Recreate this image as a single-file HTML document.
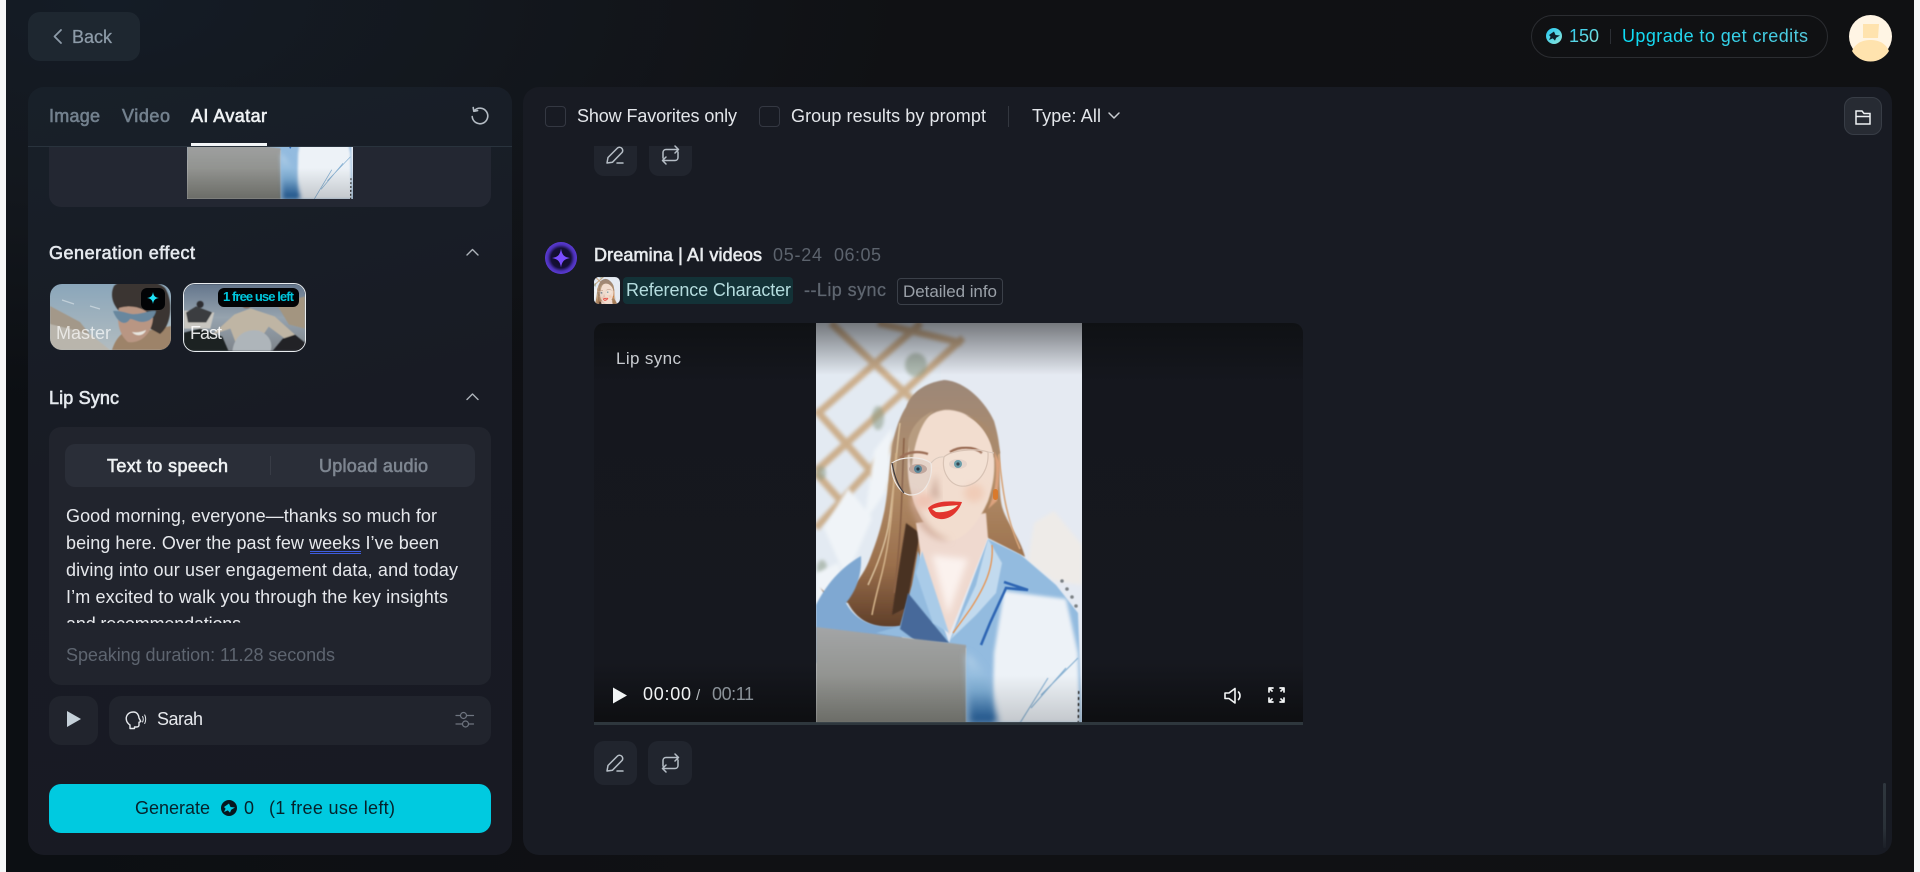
<!DOCTYPE html>
<html lang="en"><head><meta charset="utf-8"><title>Dreamina AI Avatar</title>
<style>
html,body{margin:0;padding:0;width:1920px;height:872px;overflow:hidden;background:#f6f7f8;font-family:"Liberation Sans",sans-serif}
.a{position:absolute;box-sizing:border-box}
#main{left:6px;top:0;width:1908px;height:872px;background:radial-gradient(800px 400px at 100px 0,#141c26 0%,#13171d 50%,rgba(16,17,20,0) 100%),linear-gradient(90deg,#0c0f13 0,#101114 40%,#101113 100%)}
svg{position:absolute;overflow:hidden}
text{font-family:"Liberation Sans",sans-serif;font-size:18px}
.m{stroke-width:.25px}
.b{stroke-width:.6px}
</style></head><body>
<svg width="0" height="0" style="position:absolute"><defs>
<filter id="b1" x="-10%" y="-10%" width="120%" height="120%"><feGaussianBlur stdDeviation="1.800"/></filter>
<filter id="b2" x="-10%" y="-10%" width="120%" height="120%"><feGaussianBlur stdDeviation=".9"/></filter>
<filter id="b3" x="-30%" y="-30%" width="160%" height="160%"><feGaussianBlur stdDeviation="3.500"/></filter>
<filter id="b4" x="-10%" y="-10%" width="120%" height="120%"><feGaussianBlur stdDeviation=".45"/></filter>
<linearGradient id="hair" x1="0" y1="0" x2="0" y2="1"><stop offset="0" stop-color="#9c8778"/><stop offset=".4" stop-color="#b28d68"/><stop offset=".75" stop-color="#9a6f4c"/><stop offset="1" stop-color="#5f3e28"/></linearGradient>
<linearGradient id="lap" x1="0" y1="0" x2="0" y2="1"><stop offset="0" stop-color="#a3a5a6"/><stop offset="1" stop-color="#82837c"/></linearGradient>
<linearGradient id="blu" x1="0" y1="0" x2="0" y2="1"><stop offset="0" stop-color="#b4d0e8"/><stop offset=".55" stop-color="#7fb0d8"/><stop offset="1" stop-color="#1c5c9e"/></linearGradient>
<linearGradient id="topf" x1="0" y1="0" x2="0" y2="1"><stop offset="0" stop-color="#050608" stop-opacity=".5"/><stop offset=".13" stop-color="#050608" stop-opacity="0"/><stop offset=".88" stop-color="#050608" stop-opacity="0"/><stop offset="1" stop-color="#050608" stop-opacity=".18"/></linearGradient>
<symbol id="photo" viewBox="0 0 266 400" preserveAspectRatio="none">
<rect width="266" height="400" fill="#e5eaf2"/>
<rect x="0" width="125" height="320" fill="#e3eaf2"/>
<g filter="url(#b1)" fill="none" stroke="#c9a882" stroke-width="7" opacity=".9">
<path d="M105 0L0 92M147 15L0 148M125 70L0 205"/><path d="M15 0L100 80M0 87L70 165M0 150L40 195M62 0L146 20"/>
</g>
<g filter="url(#b1)" fill="#8a9a84" opacity=".55"><ellipse cx="100" cy="42" rx="11" ry="12"/><ellipse cx="62" cy="95" rx="6" ry="12"/><ellipse cx="5" cy="150" rx="5" ry="7"/><ellipse cx="6" cy="245" rx="5" ry="8"/></g>
<g filter="url(#b1)" fill="#f0f4f8"><path d="M58 128L76 105 72 165 48 200Z"/><path d="M8 205L32 165 56 195 30 255Z"/><path d="M0 250L22 240 30 262 0 280Z"/></g>
<path filter="url(#b1)" d="M218 200L238 188 266 222 266 262 238 258 212 238Z" fill="#eeebe8"/>
<g filter="url(#b4)" fill="#7b8185"><circle cx="246" cy="258" r="1.800"/><circle cx="251" cy="266" r="1.800"/><circle cx="256" cy="274" r="1.800"/><circle cx="260" cy="283" r="1.800"/></g>
<!-- hair -->
<path filter="url(#b2)" d="M128 57C108 60 95 70 90 84 80 100 76 120 74 140 72 160 71 178 67 194 63 212 58 225 53 238 48 250 40 262 29 270 15 274 8 270 4 264 10 276 22 276 32 280 38 292 50 303 67 304L86 304C92 290 95 280 96 267L105 228 170 214 209 234C205 218 195 205 190 194 184 182 183 170 184 137 184 118 180 105 178 98 170 80 150 58 128 57Z" fill="url(#hair)"/>
<path filter="url(#b2)" d="M90 200C86 225 80 262 76 292L90 285 100 232 104 210Z" fill="#4a3024"/>
<g filter="url(#b4)" fill="none" stroke-width="1.600"><path d="M84 100C80 130 78 170 72 205 68 225 60 245 52 262" stroke="#d6bc98"/><path d="M80 130C77 170 76 210 66 250 62 265 58 280 56 292" stroke="#cfae86"/><path d="M88 115C86 160 86 210 78 270" stroke="#8a6246"/><path d="M182 125C186 160 188 190 204 226" stroke="#d7a67c"/></g>
<!-- shirt -->
<path filter="url(#b2)" d="M0 282C10 262 24 245 45 233 46 252 40 268 30 280 40 298 58 306 84 303L90 340 0 340Z" fill="#7fa8d2"/>
<path filter="url(#b2)" d="M102 228L133 320 172 216 205 232 240 262 262 290 266 400 150 400 150 325 60 310 84 303 96 262Z" fill="#93bbdf"/>
<path filter="url(#b2)" d="M92 270L133 320 100 318 84 306Z" fill="#46699a"/>
<!-- neck -->
<path filter="url(#b2)" d="M100 200L106 240 133 312 172 215 170 190Z" fill="#efd9cf"/>
<path filter="url(#b3)" d="M116 232L132 292 152 236Z" fill="#fbf2ee"/>
<path filter="url(#b2)" d="M106 228L133 310 117 300 100 250Z" fill="#a9cbe8"/>
<path filter="url(#b2)" d="M172 216L186 240 180 270 160 292 135 316 160 262Z" fill="#c2daee"/>
<!-- white shirt right -->
<path filter="url(#b1)" d="M188 268L250 276 262 330 264 400 176 400 178 330Z" fill="#edf2f7"/>
<path d="M188 259L212 267 190 265 174 300 165 322" stroke="#2f66b4" stroke-width="2.600" fill="none" filter="url(#b4)"/>
<path d="M176 222C178 245 168 265 155 285 148 295 142 303 137 310" stroke="#e8914c" stroke-width="1.300" fill="none" filter="url(#b4)"/>
<!-- face -->
<path filter="url(#b2)" d="M128 87C108 90 94 108 92 132 90 160 97 182 106 197 114 210 125 217 133 218 150 217 165 195 172 178 178 160 179 148 178 132 174 104 150 85 128 87Z" fill="#f2ddcf"/>
<path filter="url(#b3)" d="M95 165C100 195 118 214 135 217 114 220 92 195 95 165Z" fill="#cca491"/>
<ellipse cx="108" cy="178" rx="10" ry="8" fill="#eec5b4" filter="url(#b3)"/><ellipse cx="158" cy="170" rx="10" ry="9" fill="#f0ccb8" filter="url(#b3)"/>
<path filter="url(#b2)" d="M92 120C94 104 106 92 118 88 104 100 98 120 95 150Z" fill="#b79c80"/>
<path filter="url(#b2)" d="M150 92C166 100 176 116 178 135L184 130C180 110 168 96 150 92Z" fill="#a98a6d"/>
<path filter="url(#b2)" d="M178 128C182 148 180 170 172 186L181 178 184 140Z" fill="#dca27d"/>
<path d="M84 135C92 128 103 128 112 131M134 129C144 123 157 123 166 130" stroke="#9d7058" stroke-width="2.400" fill="none" filter="url(#b4)"/>
<ellipse cx="102" cy="146" rx="9" ry="5" fill="#c9ab9e"/><ellipse cx="142" cy="141" rx="9" ry="5" fill="#e3cfc3"/>
<circle cx="102" cy="146" r="4" fill="#57889a"/><circle cx="142" cy="141" r="4" fill="#57919f"/>
<circle cx="102" cy="146" r="1.600" fill="#1d2d38"/><circle cx="142" cy="141" r="1.600" fill="#1d2d38"/>
<path d="M76 140C86 133 105 133 115 140 117 155 110 172 95 172 84 172 74 155 76 140Z" fill="#8f8f9b" fill-opacity=".12" stroke="#efe9e5" stroke-width="1.200"/>
<path d="M76 140C78 150 80 160 88 170" stroke="#3f3b3f" stroke-width="1.200" fill="none"/>
<path d="M128 134C135 127 160 125 172 129 173 145 165 160 150 163 135 165 125 150 128 134Z" fill="#fff" fill-opacity=".12" stroke="#d8c3b5" stroke-width="1.200"/>
<path d="M115 140Q121 133 128 134M172 129L178 130" stroke="#d9c9bd" stroke-width="1.100" fill="none"/>
<path filter="url(#b3)" d="M120 150L114 172 124 178Z" fill="#cfae9f"/>
<path d="M112 185C120 177 135 178 146 179 141 193 130 197 124 196 117 195 114 191 112 185Z" fill="#e2352e"/>
<path d="M116 186C124 183 134 183 142 182 137 188 126 190 120 189Z" fill="#f4efd9"/>
<rect x="177" y="166" width="5" height="11" rx="2.500" fill="#d97a2c"/>
<!-- laptop -->
<path filter="url(#b2)" d="M0 304L150 322 150 400 0 400Z" fill="url(#lap)"/>
<path filter="url(#b3)" d="M150 330C160 336 172 350 176 372L182 400 154 400Z" fill="url(#blu)"/>
<path filter="url(#b4)" d="M204 400L232 355M215 385L250 345M225 372L262 335" stroke="#86b0d2" stroke-width="1.100" fill="none"/>
<path d="M263 368L262 400" stroke="#3a3a3a" stroke-width="2.200" stroke-dasharray="3 3" fill="none" filter="url(#b4)"/>
<rect width="266" height="400" fill="url(#topf)"/>
</symbol>
<linearGradient id="crd" x1="0" y1="0" x2="1" y2="1"><stop offset="0" stop-color="#22c7f2"/><stop offset="1" stop-color="#8fe6d8"/></linearGradient>
<linearGradient id="upg" x1="0" y1="0" x2="1" y2="0"><stop offset="0" stop-color="#0bdcf5"/><stop offset="1" stop-color="#53c9de"/></linearGradient>
<radialGradient id="dav" cx=".5" cy=".5" r=".5"><stop offset="0" stop-color="#0e0b25"/><stop offset=".62" stop-color="#151036"/><stop offset=".82" stop-color="#4a30b5"/><stop offset="1" stop-color="#5c3bd6"/></radialGradient>
<clipPath id="cl"><rect x="60" y="500" width="420" height="123"/></clipPath>
</defs></svg>

<div class="a" id="main"></div>
<div class="a" style="left:28px;top:12px;width:112px;height:49px;border-radius:12px;background:#1e2730"></div>

<!-- right panel -->
<div class="a" style="left:523px;top:87px;width:1369px;height:768px;border-radius:16px;background:#181b23"></div>
<div class="a" style="left:1844px;top:97px;width:38px;height:38px;border-radius:10px;background:#272b33;border:1px solid #383d46"></div>
<div class="a" style="left:545px;top:106px;width:21px;height:21px;border-radius:4px;border:1px solid #343842"></div>
<div class="a" style="left:759px;top:106px;width:21px;height:21px;border-radius:4px;border:1px solid #343842"></div>
<div class="a" style="left:1008px;top:106px;width:1px;height:21px;background:#33373f"></div>
<div class="a" style="left:594px;top:146px;width:43px;height:30px;border-radius:0 0 10px 10px;background:#21252e"></div>
<div class="a" style="left:649px;top:146px;width:43px;height:30px;border-radius:0 0 10px 10px;background:#21252e"></div>
<div class="a" style="left:594px;top:741px;width:43px;height:44px;border-radius:10px;background:#21252e"></div>
<div class="a" style="left:648px;top:741px;width:44px;height:44px;border-radius:10px;background:#21252e"></div>
<div class="a" style="left:623px;top:277px;width:170px;height:27px;border-radius:4px;background:#133237"></div>
<div class="a" style="left:897px;top:278px;width:106px;height:27px;border-radius:4px;border:1px solid #3b4049"></div>
<div class="a" style="left:1883px;top:783px;width:3px;height:65px;background:linear-gradient(#2f373e,#2a3138 70%,rgba(42,49,56,.2));border-radius:2px"></div>

<!-- video -->
<div class="a" style="left:594px;top:323px;width:709px;height:402px;border-radius:10px 10px 0 0;overflow:hidden;background:linear-gradient(#0f1114 0,#15171e 60px,#16181f 340px,#0e0f12 395px)">
  <svg style="left:222px;top:0" width="266" height="400"><use href="#photo" width="266" height="400"/></svg>
  <div class="a" style="left:0;top:399px;width:709px;height:3px;background:rgba(50,60,66,.9)"></div>
</div>

<!-- left panel -->
<div class="a" style="left:28px;top:87px;width:484px;height:768px;border-radius:16px;background:linear-gradient(165deg,#182029 0,#181b24 45%,#181a23 100%)"></div>
<div class="a" style="left:28px;top:146px;width:484px;height:1px;background:#29333d"></div>
<div class="a" style="left:191px;top:143px;width:76px;height:3px;background:#f2f5f7"></div>
<div class="a" style="left:49px;top:147px;width:442px;height:60px;border-radius:0 0 12px 12px;background:#232732"></div>
<svg style="left:187px;top:147px" width="166" height="52" viewBox="0 320 266 80" preserveAspectRatio="none"><use href="#photo" width="266" height="400"/></svg>

<!-- master card -->
<svg style="left:50px;top:284px;border-radius:12px" width="121" height="66" viewBox="0 0 121 66">
<defs><linearGradient id="sky" x1="0" y1="0" x2="0" y2="1"><stop offset="0" stop-color="#8aa6ba"/><stop offset="1" stop-color="#b2bcc0"/></linearGradient></defs>
<rect width="121" height="66" fill="url(#sky)"/>
<g filter="url(#b4)"><path d="M0 22L30 38 52 66 0 66Z" fill="#a39889"/><path d="M0 40L40 50 60 66 0 66Z" fill="#b9b5ac"/>
<path d="M62 66C68 48 78 44 90 48L121 42 121 66Z" fill="#9d8369"/>
<path d="M64 2C74-8 104-6 115 4 124 18 121 42 110 50L70 28C62 20 60 10 64 2Z" fill="#3a3431"/>
<path d="M69 24C82 20 96 24 103 34 102 50 90 60 78 58 70 52 66 38 69 24Z" fill="#b99683"/>
<path d="M63 27C72 26 80 31 85 30 92 30 100 26 106 27 104 35 98 38 92 38 87 38 84 35 80 35 76 42 68 40 63 27Z" fill="#67879e"/>
<path d="M82 48C86 49 92 48 96 46 94 52 86 53 82 48Z" fill="#e8e6df"/></g>
<path d="M12 16L24 20M40 22L50 25" stroke="#dfe7ec" stroke-width="1.200" opacity=".6"/>
</svg>
<div class="a" style="left:141px;top:288px;width:24px;height:22px;border-radius:6px;background:#020305"></div>
<svg style="left:146px;top:291px" width="14" height="14" viewBox="0 0 14 14"><path d="M7 1C7.600 5 9 6.400 13 7 9 7.600 7.600 9 7 13 6.400 9 5 7.600 1 7 5 6.400 6.400 5 7 1Z" fill="#1fe3f7"/></svg>
<!-- fast card -->
<svg style="left:183px;top:283px;border-radius:12px;box-sizing:border-box;border:1.500px solid #e9edf0" width="123" height="69" viewBox="0 0 120 66">
<defs><linearGradient id="sky2" x1="0" y1="0" x2="0" y2="1"><stop offset="0" stop-color="#64768c"/><stop offset=".5" stop-color="#96a3ae"/><stop offset="1" stop-color="#7f858c"/></linearGradient></defs>
<rect width="120" height="66" fill="url(#sky2)"/>
<g filter="url(#b4)"><path d="M92 20L120 12 120 44 104 40Z" fill="#a39580"/><path d="M0 26L30 28 26 44 0 44Z" fill="#c8c6c0"/><path d="M2 28L12 22 28 28 22 38 4 38Z" fill="#3a3d41"/><circle cx="16" cy="20" r="3.500" fill="#2d2f33"/>
<path d="M28 50L50 30 66 24 90 32 110 50 100 54 84 42 72 60 52 60 46 44Z" fill="#bfb5a4"/>
<circle cx="62" cy="18" r="6" fill="#7f6456"/><path d="M48 8C58 2 72 4 82 10L70 13 56 13Z" fill="#3c3532"/>
<path d="M48 66C50 50 62 44 74 46 86 50 88 60 86 66Z" fill="#aeb5ba"/><path d="M0 48L16 44 38 52 44 66 0 66Z" fill="#1c2024"/><path d="M98 54L110 50 120 58 120 66 88 66Z" fill="#202327"/></g>
</svg>
<div class="a" style="left:218px;top:288px;width:81px;height:19px;border-radius:6px;background:#020305"></div>

<!-- lip sync box -->
<div class="a" style="left:49px;top:427px;width:442px;height:258px;border-radius:12px;background:#21242d"></div>
<div class="a" style="left:65px;top:444px;width:410px;height:43px;border-radius:10px;background:#2a2e38"></div>
<div class="a" style="left:270px;top:456px;width:1px;height:19px;background:#383c46"></div>
<div class="a" style="left:310px;top:551px;width:51px;height:3px;border-top:1px solid #3e5de0;border-bottom:1px solid #3e5de0"></div>
<div class="a" style="left:49px;top:696px;width:49px;height:49px;border-radius:12px;background:#21242d"></div>
<div class="a" style="left:109px;top:696px;width:382px;height:49px;border-radius:12px;background:#21242d"></div>
<div class="a" style="left:49px;top:784px;width:442px;height:49px;border-radius:12px;background:#00cae0"></div>

<!-- top right -->
<div class="a" style="left:1531px;top:15px;width:297px;height:43px;border-radius:22px;border:1px solid #2b2d31"></div>
<div class="a" style="left:1610px;top:29px;width:1px;height:15px;background:#2c2f34"></div>

<!-- icons + text layer -->
<svg style="left:0;top:0" width="1920" height="872" viewBox="0 0 1920 872">
<g fill="none" stroke-linecap="round" stroke-linejoin="round">
<path d="M61 30L54.500 36.500 61 43" stroke="#8d9ba8" stroke-width="1.800"/>
<path d="M474.200 110.700A7.800 7.800 0 1 1 472.200 116.500M473.200 107.500L473.800 111.300 477.600 110.600" stroke="#b4bcc4" stroke-width="1.600"/>
<path d="M467 255L472.500 249.500 478 255M467 399.500L472.500 394 478 399.500" stroke="#aeb4bb" stroke-width="1.400"/>
<path d="M1109 113L1114 118 1119 113" stroke="#c9ccd1" stroke-width="1.500"/>
<!-- pencils -->
<g stroke="#b6bec6" stroke-width="1.500">
<path d="M607 163L608 157.500 617.500 148C619 146.800 621 147.200 622 148.500 623 150 622.800 151.500 622 152.500L612.500 162.200 607 163ZM617 163H623"/>
<path d="M607 771L608 765.500 617.500 756C619 754.800 621 755.200 622 756.500 623 758 622.800 759.500 622 760.500L612.500 770.200 607 771ZM617 771H623"/>
<path d="M663 158V152.500C663 150.500 664.500 149.500 666 149.500H678M675 146L678.500 149.500 675 153M678 152V157.500C678 159.500 676.500 160.500 675 160.500H663M666 157L662.500 160.500 666 164"/>
<path d="M663 766V760.500C663 758.500 664.500 757.500 666 757.500H678M675 754L678.500 757.500 675 761M678 760V765.500C678 767.500 676.500 768.500 675 768.500H663M666 765L662.500 768.500 666 772"/>
</g>
<!-- folder -->
<path d="M1856 111H1862L1864 113.500H1870V124H1856ZM1856 116.500H1870" stroke="#eef1f3" stroke-width="1.500" stroke-linejoin="miter"/>
<!-- settings -->
<g stroke="#6f7580" stroke-width="1.200"><path d="M456 715.500H460M467 715.500H473.500M456 724H462M469 724H473.500"/><circle cx="463.500" cy="715.500" r="3"/><circle cx="465.500" cy="724" r="3"/></g>
<!-- head -->
<g stroke="#e5e8ec" stroke-width="1.400"><path d="M130 728.500V725C127 723 126 720 126.300 717.500 127 713.800 130 712 133.500 712 137 712 138.800 715 139 718L140.800 721.500 139 722.300V725C139 726.300 138 727 136.500 727H134.500V728.500Z"/><path d="M142.500 716.500C143.500 718 143.500 720.500 142.500 722" stroke-width="1"/><path d="M144.700 715C146 717.500 146 721 144.700 723.500" stroke-width="1"/></g>
<!-- volume -->
<g stroke="#f3f5f6" stroke-width="1.600"><path d="M1225 693H1229L1235 688.500V703L1229 698.500H1225Z"/><path d="M1238.500 692C1240.500 694 1240.500 697.500 1238.500 699.500"/></g>
<!-- full -->
<g stroke="#f3f5f6" stroke-width="1.700"><path d="M1269 692V688H1273M1269 688L1272 691M1284 692V688H1280M1284 688L1281 691M1269 698V702H1273M1269 702L1272 699M1284 698V702H1280M1284 702L1281 699"/></g>
</g>
<path d="M67 711L81 719 67 727Z" fill="#c5d0d9"/>
<path d="M613 687.500L627 695.500 613 703.500Z" fill="#f2f4f5"/>
<!-- dreamina avatar -->
<circle cx="561" cy="258" r="16" fill="url(#dav)"/>
<path d="M561 248.500C562 255 564 257 570 258 564 259 562 261.500 561 267.500 560 261.500 558 259 552 258 558 257 560 255 561 248.500Z" fill="#7a4dff"/>
<!-- credit icons -->
<circle cx="1554" cy="36" r="8" fill="url(#crd)"/>
<path d="M1554 31.500L1555.500 35 1560 35.500 1556.200 37.800 1555 40.600 1552.800 38.400 1549 40 1550.600 36.800 1549 35Z" fill="#0d1f29"/>
<circle cx="229" cy="808" r="8" fill="#06171f"/>
<path d="M229 803.500L230.500 807 235 807.500 231.200 809.800 230 812.600 227.800 810.400 224 812 225.600 808.800 224 807Z" fill="#00cae0"/>
<!-- avatar -->
<circle cx="1870.500" cy="36.500" r="21.500" fill="#fff5e4"/>
<path d="M1863 24H1879L1878 38H1863Z" fill="#ffe3ae"/>
<path d="M1852 51C1856 42 1864 40 1870.500 40 1877 40 1885 42 1889 51A21.500 21.500 0 0 1 1852 51Z" fill="#ffe3ae"/>

<!-- TEXT -->
<text x="72" y="43" textLength="40" lengthAdjust="spacing" fill="#8d9ba8" stroke="#8d9ba8" class="m">Back</text>
<text x="49" y="122" textLength="51" lengthAdjust="spacing" fill="#73818e" stroke="#73818e" class="b">Image</text>
<text x="122" y="122" textLength="48" lengthAdjust="spacing" fill="#73818e" stroke="#73818e" class="b">Video</text>
<text x="191" y="122" textLength="76" lengthAdjust="spacing" fill="#eef1f3" stroke="#eef1f3" class="b">AI Avatar</text>
<text x="49" y="259" textLength="146" lengthAdjust="spacing" fill="#e5e9ee" stroke="#e5e9ee" class="b">Generation effect</text>
<text x="56" y="339" textLength="55" lengthAdjust="spacing" fill="#fff" fill-opacity=".68">Master</text>
<text x="190" y="339" textLength="32" lengthAdjust="spacing" fill="#fff" fill-opacity=".88">Fast</text>
<text x="223" y="301" textLength="71" lengthAdjust="spacing" style="font-size:13px;font-weight:700" fill="#00c6dc">1 free use left</text>
<text x="49" y="404" textLength="70" lengthAdjust="spacing" fill="#e5e9ee" stroke="#e5e9ee" class="b">Lip Sync</text>
<text x="107" y="472" textLength="121" lengthAdjust="spacing" fill="#eef1f3" stroke="#eef1f3" class="b">Text to speech</text>
<text x="319" y="472" textLength="109" lengthAdjust="spacing" fill="#7e8691" stroke="#7e8691" class="b">Upload audio</text>
<g fill="#e6e8ec" clip-path="url(#cl)">
<text x="66" y="522" textLength="371" lengthAdjust="spacing">Good morning, everyone—thanks so much for</text>
<text x="66" y="549" textLength="373" lengthAdjust="spacing">being here. Over the past few weeks I’ve been</text>
<text x="66" y="576" textLength="392" lengthAdjust="spacing">diving into our user engagement data, and today</text>
<text x="66" y="603" textLength="382" lengthAdjust="spacing">I’m excited to walk you through the key insights</text>
<text x="66" y="630" textLength="180" lengthAdjust="spacing">and recommendations.</text>
</g>
<text x="66" y="661" textLength="269" lengthAdjust="spacing" fill="#5e6570">Speaking duration: 11.28 seconds</text>
<text x="157" y="725" textLength="46" lengthAdjust="spacing" fill="#e6e8ec">Sarah</text>
<text x="135" y="814" textLength="75" lengthAdjust="spacing" fill="#06222b">Generate</text>
<text x="244" y="814" textLength="10" lengthAdjust="spacing" fill="#06222b">0</text>
<text x="269" y="814" textLength="126" lengthAdjust="spacing" fill="#06222b">(1 free use left)</text>

<text x="1569" y="42" textLength="30" lengthAdjust="spacing" fill="url(#crd)">150</text>
<text x="1622" y="42" textLength="186" lengthAdjust="spacing" fill="url(#upg)">Upgrade to get credits</text>

<text x="577" y="122" textLength="160" lengthAdjust="spacing" fill="#e3e6ea">Show Favorites only</text>
<text x="791" y="122" textLength="195" lengthAdjust="spacing" fill="#e3e6ea">Group results by prompt</text>
<text x="1032" y="122" textLength="69" lengthAdjust="spacing" fill="#e3e6ea">Type: All</text>
<text x="594" y="261" textLength="168" lengthAdjust="spacing" fill="#e8ebee" stroke="#e8ebee" class="b">Dreamina | AI videos</text>
<text x="773" y="261" textLength="49" lengthAdjust="spacing" fill="#5c636d">05-24</text>
<text x="834" y="261" textLength="47" lengthAdjust="spacing" fill="#5c636d">06:05</text>
<text x="626" y="296" textLength="165" lengthAdjust="spacing" fill="#b4dcde">Reference Character</text>
<text x="804" y="296" textLength="82" lengthAdjust="spacing" fill="#5f6670" stroke="#5f6670" class="m">--Lip sync</text>
<text x="903" y="297" textLength="94" lengthAdjust="spacing" style="font-size:17px" fill="#9aa0a8">Detailed info</text>
<text x="616" y="364" textLength="65" lengthAdjust="spacing" style="font-size:17px" fill="#c9ccd1">Lip sync</text>
<text x="643" y="700" textLength="48" lengthAdjust="spacing" fill="#f0f2f3">00:00</text>
<text x="696" y="700" textLength="4" lengthAdjust="spacing" style="font-size:15px" fill="#b8bcc0">/</text>
<text x="712" y="700" textLength="42" lengthAdjust="spacing" fill="#8b9299">00:11</text>
</svg>

<!-- reference thumb -->
<svg style="left:594px;top:277px;border-radius:5px" width="26" height="27" viewBox="55 45 165 172" preserveAspectRatio="none"><use href="#photo" width="266" height="400"/></svg>
</body></html>
